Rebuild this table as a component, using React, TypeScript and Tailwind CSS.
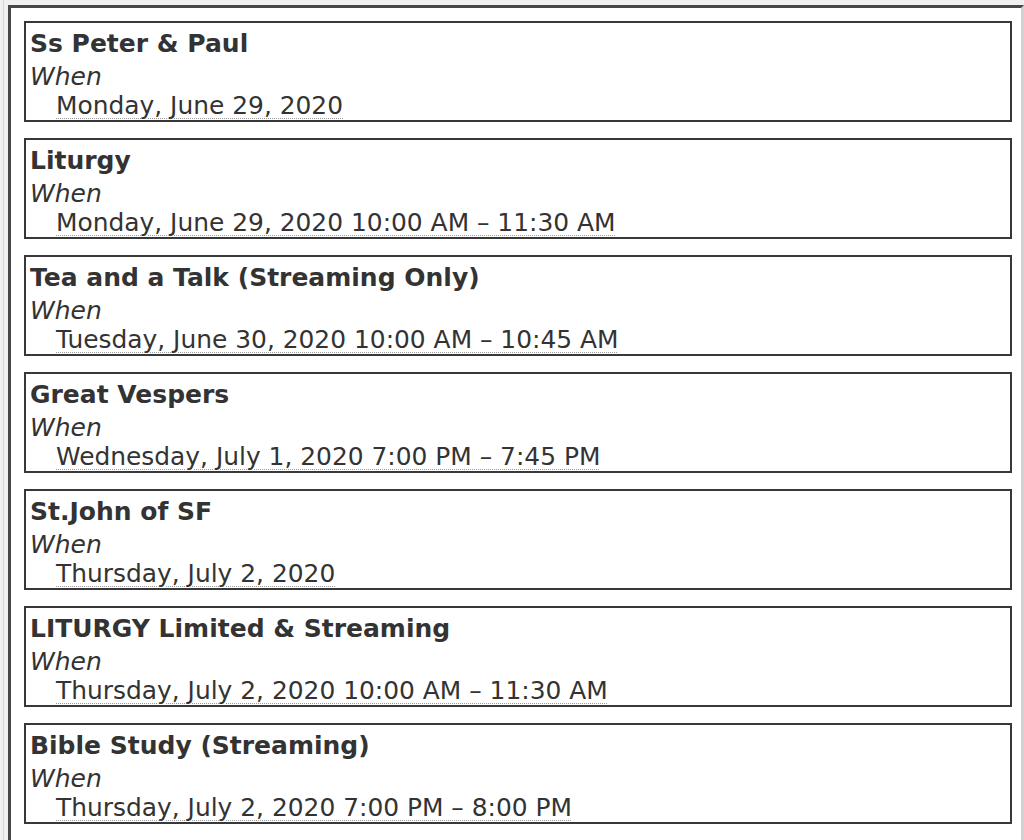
const events = [
  { title: "Ss Peter & Paul", when: "Monday, June 29, 2020" },
  { title: "Liturgy", when: "Monday, June 29, 2020 10:00 AM – 11:30 AM" },
  { title: "Tea and a Talk (Streaming Only)", when: "Tuesday, June 30, 2020 10:00 AM – 10:45 AM" },
  { title: "Great Vespers", when: "Wednesday, July 1, 2020 7:00 PM – 7:45 PM" },
  { title: "St.John of SF", when: "Thursday, July 2, 2020" },
  { title: "LITURGY Limited & Streaming", when: "Thursday, July 2, 2020 10:00 AM – 11:30 AM" },
  { title: "Bible Study (Streaming)", when: "Thursday, July 2, 2020 7:00 PM – 8:00 PM" },
];

// Embedded calendar agenda — stacked event cards inside an inset frame.
export default function App() {
  return (
    <div className="h-screen overflow-hidden bg-[#f0f0f0] pl-[3px] font-['DejaVu_Sans',sans-serif] text-[25px] text-[#333]">
      <div className="h-full border-l border-[#d6d6d6] pl-[4px] pt-[5px]">
        <div className="h-[900px] border-t-[3px] border-l-[3px] border-r-[3px] border-t-[#474747] border-l-[#474747] border-r-[#d2d2d2] bg-white pt-[13px] pl-[13px] pr-[9px]">
          {events.map((ev) => (
            <div key={ev.title} className="mb-[16px] border-2 border-[#383838] pl-[4px] pt-[6px] leading-[29px]">
              <div className="mb-[4px] font-bold">{ev.title}</div>
              <div className="italic">When</div>
              <div className="pl-[26px] text-[24.9px]">
                <span className="underline decoration-dotted decoration-[#9a9a9a] decoration-1 underline-offset-[4px]">
                  {ev.when}
                </span>
              </div>
            </div>
          ))}
        </div>
      </div>
    </div>
  );
}
